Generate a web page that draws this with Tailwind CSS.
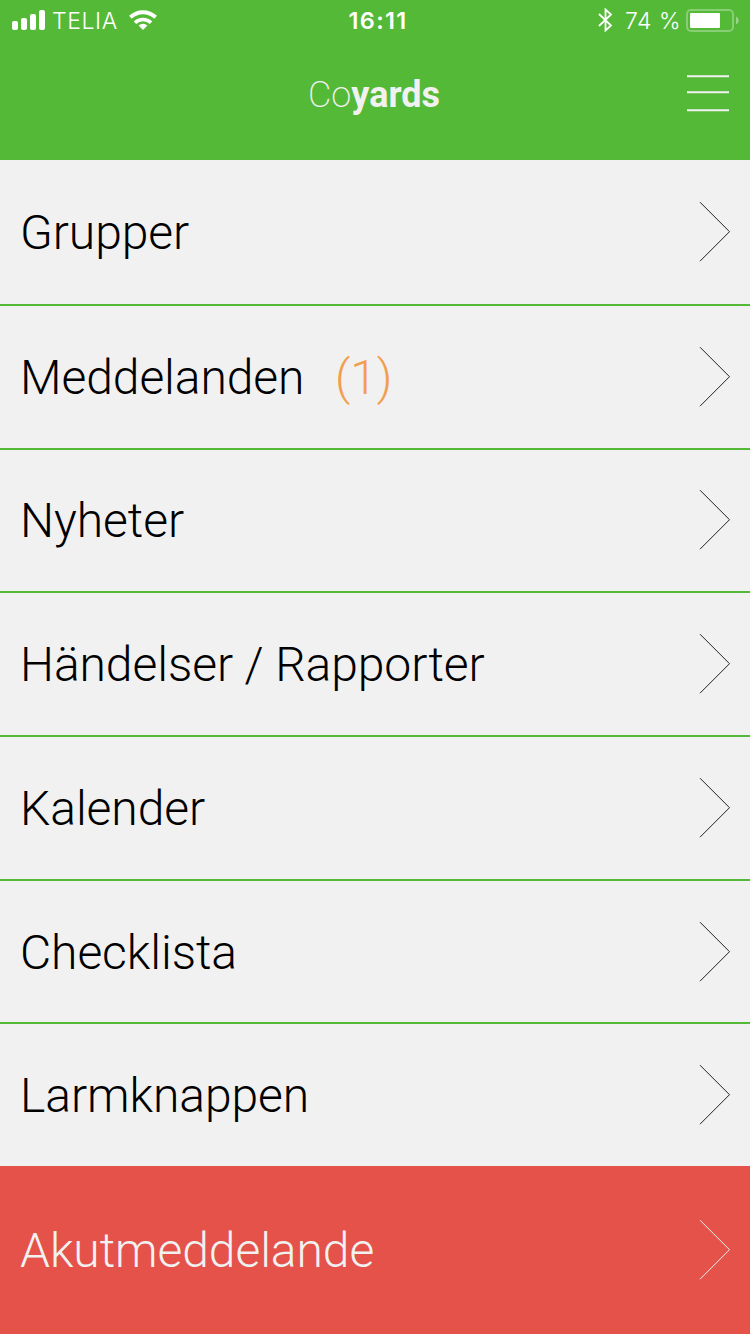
<!DOCTYPE html>
<html lang="sv">
  <head>
    <meta charset="UTF-8" />
    <title>Coyards</title>
    <meta name="viewport" content="width=device-width, initial-scale=1.0" />
    <script src="https://cdn.jsdelivr.net/npm/@tailwindcss/browser@4"></script>
  </head>
  <body class="bg-[#f1f1f1] font-['Roboto',sans-serif] font-light text-black">
    <!-- header -->
    <header class="h-[160px] bg-[#55b938] text-[#f1f1f1]">
      <!-- status bar -->
      <div
        class="grid h-10 grid-cols-[1fr_auto_1fr] items-center pl-3 pr-[11px] font-['Inter',sans-serif] text-[23px] font-normal text-white"
      >
        <div class="flex items-center">
          <svg class="h-5 w-[33px]" viewBox="0 0 33 20" fill="currentColor">
            <rect x="0" y="11" width="6" height="9" rx="2" />
            <rect x="9" y="8" width="6" height="12" rx="2" />
            <rect x="18" y="4" width="6" height="16" rx="2" />
            <rect x="27" y="0" width="6" height="20" rx="2" />
          </svg>
          <span id="carrier" class="ml-[7px] w-[66px] whitespace-nowrap pt-0.5 text-[23px] font-light tracking-[0.6px]">TELIA</span>
          <svg class="ml-[11px] h-5 w-7" viewBox="0 0 28 20" fill="none" stroke="currentColor" stroke-width="4">
            <path d="M1.4 7.2a18.2 18.2 0 0 1 25.2 0" />
            <path d="M6 12.700a11.6 11.6 0 0 1 16 0" stroke-width="3.6" />
            <path d="M14 20l-4.400-4.400a6.4 6.4 0 0 1 8.800 0z" fill="currentColor" stroke="none" />
          </svg>
        </div>
        <div class="ml-[5px] pt-0.5 text-[23.5px] font-semibold tracking-[1.3px]">16:11</div>
        <div class="flex items-center justify-end">
          <svg class="h-6 w-[15px]" viewBox="0 0 15 24" fill="none" stroke="currentColor" stroke-width="1.8">
            <path d="M1 6l12 11.500L7.500 22.500v-21L13 6.500 1 18" />
          </svg>
          <span class="ml-3 w-[54px] whitespace-nowrap pt-0.5 text-[23px] font-light tracking-[0.5px]">74 %</span>
          <svg class="ml-[7px] h-6 w-[53px]" viewBox="0 0 53 24">
            <rect x="1" y="2" width="46" height="21" rx="4" fill="none" stroke="#fff" stroke-opacity=".3" stroke-width="2" />
            <rect x="4" y="5" width="30" height="15" rx="1" fill="#fff" />
            <path d="M50 8.500c3.600 1.500 3.600 6.500 0 8z" fill="#fff" fill-opacity=".4" />
          </svg>
        </div>
      </div>
      <!-- title and menu button -->
      <div class="grid h-[110px] grid-cols-[1fr_auto_1fr] items-center pr-[21px]">
        <h1 class="col-start-2 ml-[19px] text-[36px] font-extralight"
          >Co<b class="font-bold">yards</b></h1
        >
        <svg class="h-10 w-[42px] justify-self-end" viewBox="0 0 42 40" stroke="#f1f1f1" stroke-width="2">
          <path d="M0 1.300h42M0 17.300h42M0 35.300h42" />
        </svg>
      </div>
    </header>

    <!-- menu list -->
    <nav class="text-[48px] leading-[56px] tracking-[-0.08px]">
      <a class="flex h-[146px] items-center justify-between border-b-2 border-[#55b938] pl-5 pr-[19px]">
        <span class="pt-0.5">Grupper</span>
        <svg class="h-[60px] w-8" viewBox="0 0 32 60" fill="none" stroke="#222"><path d="M1 .2l29.500 29.500L1 59.200" /></svg>
      </a>
      <a class="flex h-[144px] items-center justify-between border-b-2 border-[#55b938] pl-5 pr-[19px]">
        <span class="pt-0.5">Meddelanden <span class="ml-[19px] text-[#f19e50]">(1)</span></span>
        <svg class="h-[60px] w-8" viewBox="0 0 32 60" fill="none" stroke="#222"><path d="M1 .2l29.500 29.500L1 59.200" /></svg>
      </a>
      <a class="flex h-[143px] items-center justify-between border-b-2 border-[#55b938] pb-px pl-5 pr-[19px]">
        <span class="pt-0.5">Nyheter</span>
        <svg class="h-[60px] w-8" viewBox="0 0 32 60" fill="none" stroke="#222"><path d="M1 .2l29.500 29.500L1 59.200" /></svg>
      </a>
      <a class="flex h-[144px] items-center justify-between border-b-2 border-[#55b938] pl-5 pr-[19px]">
        <span class="pt-0.5">Händelser / Rapporter</span>
        <svg class="h-[60px] w-8" viewBox="0 0 32 60" fill="none" stroke="#222"><path d="M1 .2l29.500 29.500L1 59.200" /></svg>
      </a>
      <a class="flex h-[144px] items-center justify-between border-b-2 border-[#55b938] pl-5 pr-[19px]">
        <span class="pt-0.5">Kalender</span>
        <svg class="h-[60px] w-8" viewBox="0 0 32 60" fill="none" stroke="#222"><path d="M1 .2l29.500 29.500L1 59.200" /></svg>
      </a>
      <a class="flex h-[143px] items-center justify-between border-b-2 border-[#55b938] pl-5 pr-[19px]">
        <span class="pt-0.5">Checklista</span>
        <svg class="h-[60px] w-8" viewBox="0 0 32 60" fill="none" stroke="#222"><path d="M1 .2l29.500 29.500L1 59.200" /></svg>
      </a>
      <a class="flex h-[142px] items-center justify-between pl-5 pr-[19px]">
        <span class="pt-0.5">Larmknappen</span>
        <svg class="h-[60px] w-8" viewBox="0 0 32 60" fill="none" stroke="#222"><path d="M1 .2l29.500 29.500L1 59.200" /></svg>
      </a>
      <!-- emergency message -->
      <a class="flex h-[168px] items-center justify-between bg-[#e55249] pl-5 pr-[19px] text-[#f1f1f1]">
        <span class="pt-0.5">Akutmeddelande</span>
        <svg class="h-[60px] w-8" viewBox="0 0 32 60" fill="none" stroke="#f1f1f1"><path d="M1 .2l29.500 29.500L1 59.200" /></svg>
      </a>
    </nav>
  </body>
</html>
